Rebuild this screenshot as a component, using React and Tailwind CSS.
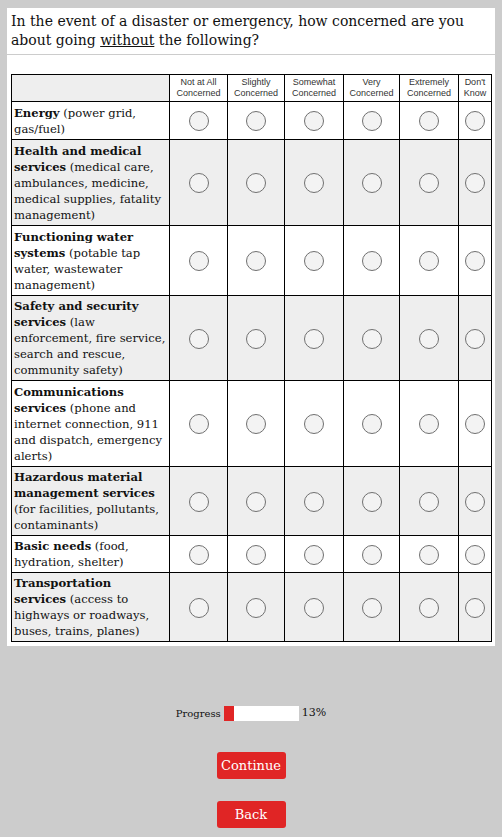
import React from 'react';

const columns = [
  ['Not at All', 'Concerned'],
  ['Slightly', 'Concerned'],
  ['Somewhat', 'Concerned'],
  ['Very', 'Concerned'],
  ['Extremely', 'Concerned'],
  ["Don't", 'Know'],
];

const colWidths = ['w-[158px]', 'w-[58px]', 'w-[57px]', 'w-[59px]', 'w-[56px]', 'w-[59px]', 'w-[33px]'];

// break = where the original wraps the bold title
const rows = [
  { title: 'Energy', rest: ' (power grid, gas/fuel)', h: 'h-[38px]' },
  { title: 'Health and medical services', rest: ' (medical care, ambulances, medicine, medical supplies, fatality management)', h: 'h-[86px]' },
  { title: 'Functioning water systems', rest: ' (potable tap water, wastewater management)', h: 'h-[70px]' },
  { title: 'Safety and security services', rest: ' (law enforcement, fire service, search and rescue, community safety)', h: 'h-[85px]' },
  { title: 'Communications services', rest: ' (phone and internet connection, 911 and dispatch, emergency alerts)', h: 'h-[86px]' },
  { title: 'Hazardous material management services', rest: ' (for facilities, pollutants, contaminants)', h: 'h-[69px]' },
  { title: 'Basic needs', rest: ' (food, hydration, shelter)', h: 'h-[37px]' },
  { title: 'Transportation', title2: 'services', rest: ' (access to highways or roadways, buses, trains, planes)', h: 'h-[69px]' },
];

const Radio = () => (
  <span className="inline-block w-[20px] h-[20px] rounded-full border border-[#707070] bg-[#f3f3f3] align-middle" />
);

export default function App() {
  return (
    <div className="min-h-[837px] bg-[#cccccc] pt-[8px] font-['DejaVu_Serif',serif] text-[#111]">
      <div className="mx-[7px] bg-white pb-[4px]">
        <div className="px-[4px] pt-[4px] pb-[4px] border-b border-[#cccccc] text-[14px] leading-[19px]">
          In the event of a disaster or emergency, how concerned are you about going{' '}
          <span className="underline">without</span> the following?
        </div>
        <div className="px-[4px] pt-[19px]">
          <table className="w-[480px] border-collapse table-fixed">
            <colgroup>
              {colWidths.map((w, i) => (
                <col key={i} className={w} />
              ))}
            </colgroup>
            <thead>
              <tr className="h-[27px]">
                <th className="border border-black bg-[#eeeeee]" />
                {columns.map((c, i) => (
                  <th
                    key={i}
                    className="border border-black bg-white font-['Liberation_Sans',sans-serif] font-normal text-[9px] leading-[11px] text-[#333] text-center px-0"
                  >
                    {c[0]}
                    <br />
                    {c[1]}
                  </th>
                ))}
              </tr>
            </thead>
            <tbody>
              {rows.map((r, i) => (
                <tr key={i} className={`${r.h} ${i % 2 === 1 ? 'bg-[#eeeeee]' : 'bg-white'}`}>
                  <td className="border border-black pl-[2px] pr-[1px] py-[2px] text-[11.6px] leading-[16px] align-middle">
                    <span className="font-bold">{r.title}</span>
                    {r.title2 && (
                      <>
                        <br />
                        <span className="font-bold">{r.title2}</span>
                      </>
                    )}
                    {r.rest}
                  </td>
                  {columns.map((c, j) => (
                    <td key={j} className="border border-black text-center align-middle">
                      <Radio />
                    </td>
                  ))}
                </tr>
              ))}
            </tbody>
          </table>
        </div>
      </div>

      <div className="flex items-center justify-center gap-[3px] mt-[59px] text-[10px]">
        <span>Progress</span>
        <div className="w-[75px] h-[15px] bg-white flex">
          <div className="w-[10px] h-full bg-[#e02525]" />
        </div>
        <span className="text-[11px]">13%</span>
      </div>

      <div className="flex flex-col items-center gap-[22px] mt-[30px]">
        <button className="w-[69px] h-[27px] rounded-[3px] bg-[#e02525] text-white text-[13px] leading-none">
          Continue
        </button>
        <button className="w-[69px] h-[27px] rounded-[3px] bg-[#e02525] text-white text-[13px] leading-none">
          Back
        </button>
      </div>
    </div>
  );
}
